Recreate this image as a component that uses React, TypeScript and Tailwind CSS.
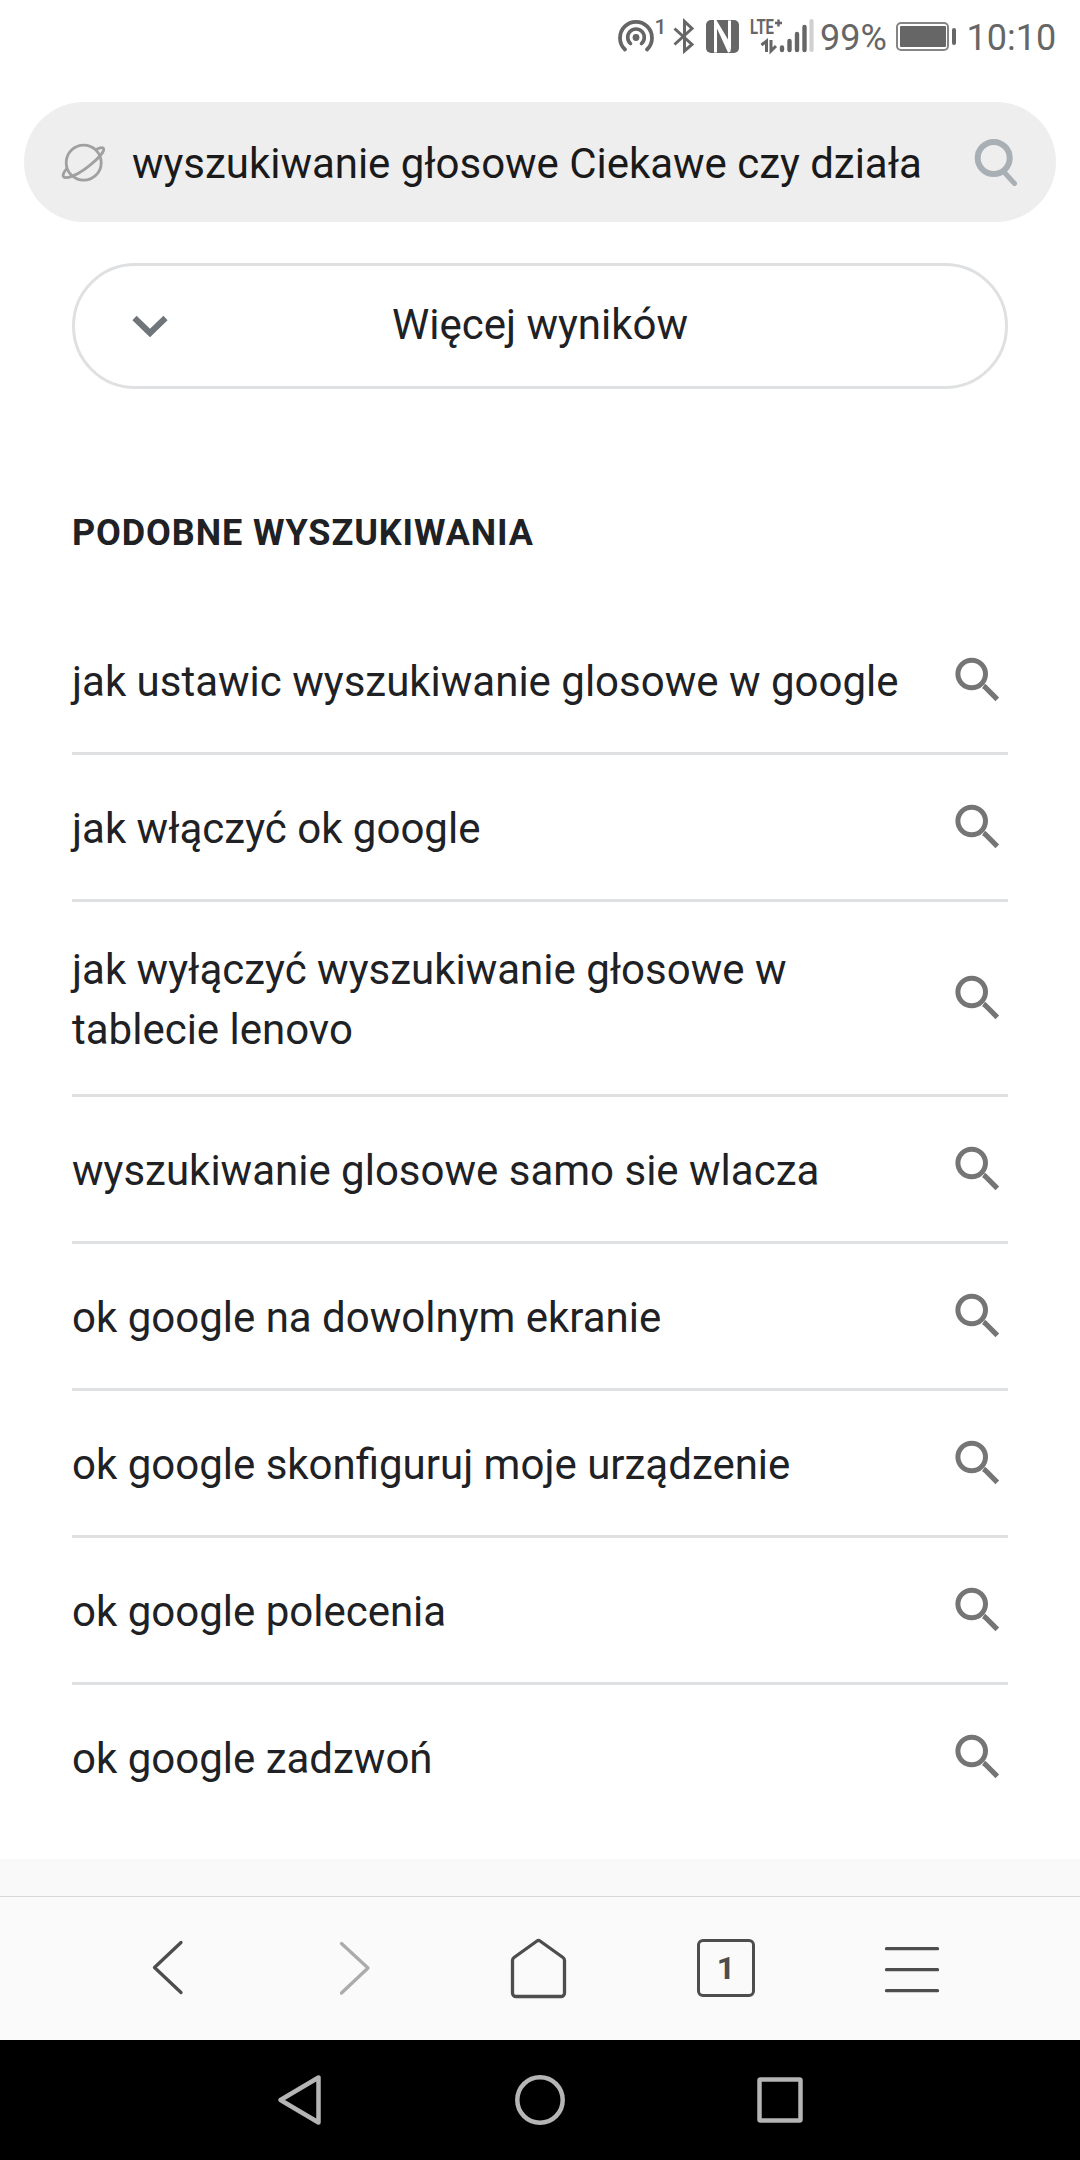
import React from "react";

const SEARCHES = [
  "jak ustawic wyszukiwanie glosowe w google",
  "jak włączyć ok google",
  "jak wyłączyć wyszukiwanie głosowe w tablecie lenovo",
  "wyszukiwanie glosowe samo sie wlacza",
  "ok google na dowolnym ekranie",
  "ok google skonfiguruj moje urządzenie",
  "ok google polecenia",
  "ok google zadzwoń",
];

function StatusBar() {
  return (
    <header className="flex h-[72px] shrink-0 items-start text-[#666666]">
      <svg className="ml-[612px] h-[72px] w-[205px] shrink-0" viewBox="612 0 205 72" fill="none" stroke="currentColor">
        <circle cx="636" cy="37.5" r="3.4" fill="currentColor" stroke="none" />
        <path d="M630.5 43.5a8.3 8.3 0 1 1 11 0" strokeWidth="3.6" strokeLinecap="round" />
        <path d="M625 49.5a16 16 0 1 1 22 0" strokeWidth="3.8" strokeLinecap="round" />
        <text x="654.5" y="34" fontSize="21" fontWeight="500" fill="currentColor" stroke="none">1</text>
        <path d="M674.5 28.5L692 44.5 684.5 51V21.5L692 28.5 674.5 44.5" strokeWidth="3" />
        <rect x="706" y="20" width="33" height="33" rx="5" fill="currentColor" stroke="none" />
        <path d="M715.5 52.5V21.500L729.500 45V20.500M715.500 21.500L729.500 52" stroke="white" strokeWidth="3" />
        <text x="750" y="34" fontSize="20" fontWeight="700" textLength="24" lengthAdjust="spacingAndGlyphs" fill="currentColor" stroke="none">LTE</text>
        <path d="M775 23h7M778.5 19.5v7" strokeWidth="2.4" />
        <path d="M761.5 45l5-4v11M771 40v11l5-5" strokeWidth="3" />
        <path d="M782 47.5v2.5M789.5 41v9M797 34v16M804.5 27v23" strokeWidth="4.4" strokeLinecap="round" />
        <path d="M811.5 21v29" stroke="#d0d0d0" strokeWidth="4.2" strokeLinecap="round" />
      </svg>
      <span className="ml-[3px] mt-[17px] w-[76px] text-[36px] leading-[42px]">99%</span>
      <span className="mt-[22px] flex h-[29px] w-[53px] items-center justify-center rounded-[5px] border-2 border-[#858585]">
        <span className="h-[21px] w-[46px] rounded-[1px] bg-[#666666]" />
      </span>
      <span className="ml-[3px] mt-[28px] h-[17px] w-1 rounded-sm bg-[#666666]" />
      <span className="ml-[10.5px] mt-[17px] text-[36px] leading-[42px]">10:10</span>
    </header>
  );
}

const TOOLS = [
  <path d="M47 18.500L20.500 43.500 47 68.500" />,
  <path d="M21.500 19.500L48 44 21.500 69" stroke="#ababab" />,
  <path d="M31 17L8 33.500a3.500 3.500 0 0 0-1.500 3V69a3.500 3.500 0 0 0 3.500 3.500H55a3.500 3.500 0 0 0 3.500-3.500V36.500a3.500 3.500 0 0 0-1.500-3L34 17a2.500 2.500 0 0 0-3 0z" />,
  null,
  <path d="M8.500 24.700H59.500M8.500 45.700H59.500M8.500 66.700H59.500" />,
];

const SYSTEM_KEYS = [
  <path d="M10.500 30L48.500 7.500V52.500z" />,
  <circle cx="30" cy="30" r="22.700" />,
  <rect x="9.500" y="9.500" width="41" height="41" rx="1" />,
];

export default function App() {
  return (
    <div className="flex h-[2160px] w-[1080px] flex-col overflow-hidden bg-white font-['Roboto',sans-serif] text-[#202124]">
      <StatusBar />
      <div className="mx-6 mt-[30px] flex h-[120px] shrink-0 items-center rounded-full bg-[#eeeeee]">
        <svg className="ml-[36px] h-12 w-12" viewBox="60 138 48 48" fill="none" stroke="#a0a0a0" strokeWidth="2.8" strokeLinejoin="round">
          <circle cx="83.7" cy="162.7" r="17.5" />
          <path d="M96.500 149.200C100 147.500 102.500 147.300 103.300 148.200C105 150.500 99 158.500 84.500 169.300C76 175.500 66 179.300 63.600 176.800C62.500 175.500 63.500 172 66.800 168.800" />
        </svg>
        <span className="ml-[24px] mt-[3px] whitespace-nowrap text-[42px] leading-[60px] tracking-[-0.03px] text-[#1a1a1a]">wyszukiwanie głosowe Ciekawe czy działa</span>
        <svg className="ml-auto mr-[36px] h-12 w-12" viewBox="972 138 48 48" fill="none" stroke="#a8afb5">
          <circle cx="993.7" cy="158" r="16" strokeWidth="6" />
          <path d="M1004 172l10.500 11.500" strokeWidth="5" strokeLinecap="round" />
        </svg>
      </div>
      <button className="mx-[72px] mt-[41px] flex h-[126px] shrink-0 items-center rounded-full border-[3px] border-[#dfe0e2]">
        <svg className="ml-[56px] h-[24px] w-[38px]" viewBox="131 314.500 38 24" fill="none" stroke="#70757a" strokeWidth="6">
          <path d="M134.500 318.500L150 333.500 165.500 318.500" />
        </svg>
        <span className="mb-[3px] mr-[94px] flex-1 text-center text-[42px] leading-[60px]">Więcej wyników</span>
      </button>
      <h2 className="ml-[72px] mt-[120px] text-[36px] font-bold leading-[48px] tracking-[0.9px]">PODOBNE WYSZUKIWANIA</h2>
      <ul className="mx-[72px] mt-[51px] shrink-0">
        {SEARCHES.map((s) => (
          <li key={s} className="flex min-h-[147px] items-center justify-between border-b-[3px] border-[#dfe0e2] py-[36px] last:border-transparent">
            <span className="-mb-[2px] mt-[2px] max-w-[840px] text-[42px] leading-[60px]">{s}</span>
            <svg className="h-[60px] w-[60px] shrink-0" viewBox="948 649.5 60 60" fill="none" stroke="#757575">
              <circle cx="971.7" cy="673.5" r="13.8" strokeWidth="5" />
              <path d="M983.500 685.500l1.500 1 12.300 12.300" strokeWidth="5.200" />
            </svg>
          </li>
        ))}
      </ul>
      <div className="mt-auto h-[37px] shrink-0 bg-[#f9f9f9]" />
      <nav className="flex h-[144px] shrink-0 border-t border-[#d8d8d8] bg-[#fafafa] px-[75px] text-[#4d4d4d]">
        {TOOLS.map((icon, i) => (
          <span key={i} className="flex w-[186px] items-start justify-center pt-[27px]">
            {icon === null ? (
              <span className="mt-[15px] flex h-[58px] w-[58px] items-center justify-center rounded-[6px] border-[3px] border-[#4d4d4d] text-[32px] font-bold">1</span>
            ) : (
              <svg className="h-[84px] w-[68px]" viewBox="0 0 68 84" fill="none" stroke="currentColor" strokeWidth="3.3" strokeLinecap="round" strokeLinejoin="round">
                {icon}
              </svg>
            )}
          </span>
        ))}
      </nav>
      <footer className="flex h-[120px] shrink-0 items-center bg-black px-[180px]">
        {SYSTEM_KEYS.map((icon, i) => (
          <span key={i} className="flex w-[240px] justify-center">
            <svg className="h-[60px] w-[60px]" viewBox="0 0 60 60" fill="none" stroke="#b5b5b5" strokeWidth="4.5" strokeLinejoin="round">
              {icon}
            </svg>
          </span>
        ))}
      </footer>
    </div>
  );
}
